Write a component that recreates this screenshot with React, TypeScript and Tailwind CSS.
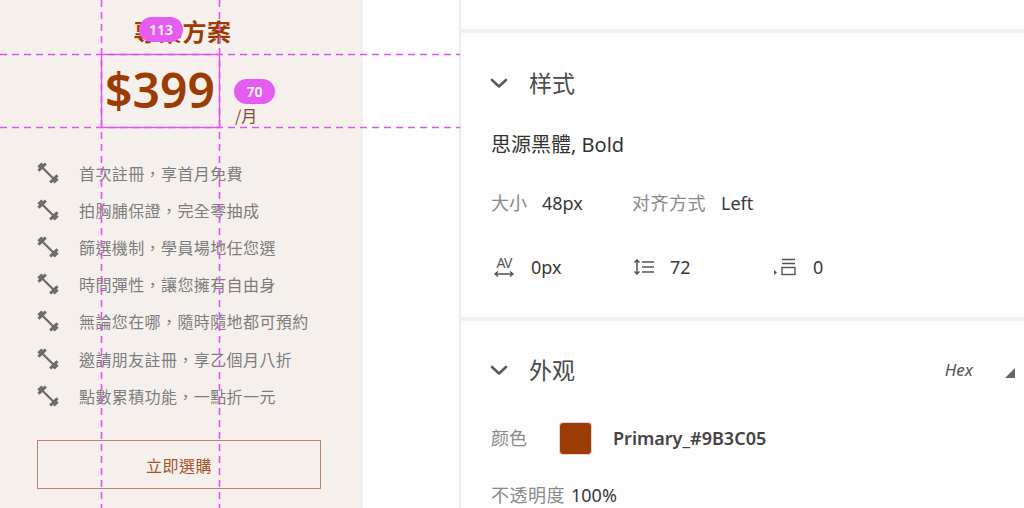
import React from 'react';

const features = [
  '首次註冊，享首月免費',
  '拍胸脯保證，完全零抽成',
  '篩選機制，學員場地任您選',
  '時間彈性，讓您擁有自由身',
  '無論您在哪，隨時隨地都可預約',
  '邀請朋友註冊，享乙個月八折',
  '點數累積功能，一點折一元',
];

function Dumbbell() {
  return (
    <svg width="22" height="22" viewBox="0 0 22 22" className="shrink-0">
      <g transform="rotate(45 11 11)" fill="#6a6a6a">
        <rect x="3" y="10" width="16" height="2.2" />
        <rect x="1.2" y="5.8" width="3" height="10.4" />
        <rect x="17.8" y="5.8" width="3" height="10.4" />
        <rect x="-1.2" y="8.2" width="2.6" height="5.6" />
        <rect x="20.6" y="8.2" width="2.6" height="5.6" />
      </g>
    </svg>
  );
}

function Chevron() {
  return (
    <svg width="18" height="11" viewBox="0 0 18 11">
      <path d="M2 2 L9 8.5 L16 2" fill="none" stroke="#5a5a5a" strokeWidth="2.6" strokeLinecap="round" strokeLinejoin="round" />
    </svg>
  );
}

function Guides() {
  return (
    <svg width="460" height="508" className="absolute left-0 top-0 pointer-events-none">
      <g stroke="#e055f0" strokeWidth="1.6" strokeDasharray="7 5">
        <line x1="101.5" y1="0" x2="101.5" y2="508" />
        <line x1="219.5" y1="0" x2="219.5" y2="508" />
        <line x1="0" y1="54.5" x2="460" y2="54.5" />
        <line x1="0" y1="127.5" x2="460" y2="127.5" />
      </g>
      <rect x="101.5" y="54.5" width="118" height="73" fill="none" stroke="#e055f0" strokeWidth="1.4" />
    </svg>
  );
}

export default function App() {
  return (
    <div className="relative flex w-[1024px] h-[508px] overflow-hidden bg-[#fdfdfd]">
      {/* 左側：方案卡片 */}
      <div
        className="w-[363px] h-full shrink-0 bg-[#f5f0ec] flex flex-col"
        style={{ fontFamily: '"Noto Sans CJK TC", "Noto Sans", sans-serif' }}
      >
        <div className="pt-[16px] h-[45px] shrink-0 text-center pl-[2px] text-[24px] leading-[29px] font-bold tracking-[0.5px] text-[#9B3C05]">
          專業方案
        </div>
        <div className="mt-[9px] flex items-end pl-[101px] shrink-0">
          <span
            className="w-[118px] h-[72px] text-center text-[48px] leading-[72px] font-semibold text-[#9B3C05]"
            style={{ fontFamily: '"Noto Sans", "Noto Sans CJK TC", sans-serif' }}
          >
            $399
          </span>
          <span className="ml-[16px] mb-[1px] text-[16px] leading-[20px] text-[#7e4a2c]">/月</span>
        </div>
        <ul className="mt-[28px] flex flex-col shrink-0">
          {features.map((f) => (
            <li key={f} className="h-[37.2px] flex items-center pl-[37px]">
              <Dumbbell />
              <span className="ml-[20px] text-[16px] tracking-[0.4px] text-[#7d7d7d]">{f}</span>
            </li>
          ))}
        </ul>
        <button className="mt-[26px] ml-[37px] w-[284px] h-[49px] shrink-0 border-[1.5px] border-[#bb8566] text-[16px] tracking-[0.5px] text-[#a4552b]">
          立即選購
        </button>
      </div>

      {/* 中間空白 */}
      <div className="w-[96px] h-full shrink-0 bg-[#fefefe]" />
      <div className="w-[2px] h-full shrink-0 bg-[#ececec]" />

      {/* 右側：屬性面板 */}
      <div
        className="flex-1 flex flex-col bg-[#fdfdfd]"
        style={{ fontFamily: '"Noto Sans", "Noto Sans CJK SC", sans-serif' }}
      >
        <div className="h-[29px] shrink-0" />
        <div className="h-[4px] shrink-0 bg-[#f1f1f1]" />
        <section className="h-[284px] shrink-0 flex flex-col">
          <div className="mt-[30px] h-[40px] shrink-0 flex items-center pl-[29px]">
            <Chevron />
            <span className="ml-[21px] text-[23px] text-[#4a4a4a]">样式</span>
          </div>
          <div className="mt-[22px] h-[40px] shrink-0 flex items-center pl-[30px] text-[20px] text-[#333]">
            思源黑體, Bold
          </div>
          <div className="mt-[18px] h-[40px] shrink-0 flex items-center pl-[30px] text-[18px]">
            <div className="w-[141px] flex items-center">
              <span className="text-[#8a8a8a]">大小</span>
              <span className="ml-[15px] text-[#3a3a3a]">48px</span>
            </div>
            <span className="text-[#8a8a8a] tracking-[0.5px]">对齐方式</span>
            <span className="ml-[15px] text-[#3a3a3a]">Left</span>
          </div>
          <div className="mt-[24px] h-[40px] shrink-0 flex items-center pl-[32px] text-[18px] text-[#3a3a3a]">
            <div className="w-[140px] flex items-center">
              <div className="w-[22px] flex flex-col items-center text-[#555]">
                <span className="text-[14px] leading-[14px] tracking-[-1px]">AV</span>
                <svg width="22" height="8" viewBox="0 0 22 8">
                  <path d="M2 4 H20 M5 1.5 L2 4 L5 6.5 M17 1.5 L20 4 L17 6.5" fill="none" stroke="#555" strokeWidth="1.4" />
                </svg>
              </div>
              <span className="ml-[16px]">0px</span>
            </div>
            <div className="w-[140px] flex items-center">
              <svg width="22" height="18" viewBox="0 0 22 18">
                <path d="M4 2 V16 M1.5 4.5 L4 2 L6.5 4.5 M1.5 13.5 L4 16 L6.5 13.5" fill="none" stroke="#555" strokeWidth="1.5" />
                <path d="M9 4 H21 M9 9 H21 M9 14 H21" stroke="#555" strokeWidth="1.5" />
              </svg>
              <span className="ml-[15px]">72</span>
            </div>
            <div className="flex items-center">
              <svg width="24" height="20" viewBox="0 0 24 20">
                <path d="M1 13 L4 15.5 L1 18 Z" fill="#555" />
                <path d="M9 2.5 H22 M9 6.5 H22" stroke="#555" strokeWidth="1.4" />
                <rect x="9" y="10.5" width="13" height="7" fill="none" stroke="#555" strokeWidth="1.4" />
              </svg>
              <span className="ml-[16px]">0</span>
            </div>
          </div>
        </section>
        <div className="h-[4px] shrink-0 bg-[#f1f1f1]" />
        <section className="flex-1 flex flex-col">
          <div className="mt-[29px] h-[40px] shrink-0 flex items-center pl-[29px] pr-[9px]">
            <Chevron />
            <span className="ml-[21px] text-[23px] text-[#4a4a4a]">外观</span>
            <span className="ml-auto text-[17px] italic text-[#555]">Hex</span>
            <svg width="10" height="10" viewBox="0 0 10 10" className="ml-[32px] mt-[6px]">
              <path d="M10 0 V10 H0 Z" fill="#666" />
            </svg>
          </div>
          <div className="mt-[28px] h-[40px] shrink-0 flex items-center pl-[30px]">
            <span className="text-[18px] text-[#8a8a8a]">颜色</span>
            <div className="ml-[32px] w-[33px] h-[33px] rounded-[4px] bg-[#9B3C05] border border-[#e2d6cf]" />
            <span className="ml-[21px] text-[18px] font-semibold text-[#444]">Primary_#9B3C05</span>
          </div>
          <div className="mt-[17px] h-[40px] shrink-0 flex items-center pl-[30px] text-[18px]">
            <span className="text-[#8a8a8a] tracking-[0.5px]">不透明度</span>
            <span className="ml-[6px] text-[#3a3a3a]">100%</span>
          </div>
        </section>
      </div>

      {/* 量測輔助線與標籤 */}
      <Guides />
      <div className="absolute left-[139px] top-[17px] w-[44px] h-[25px] rounded-full bg-[#e55cf0] flex items-center justify-center text-[14px] font-semibold text-white" style={{ fontFamily: '"Noto Sans", sans-serif' }}>
        113
      </div>
      <div className="absolute left-[234px] top-[79px] w-[41px] h-[25px] rounded-full bg-[#e55cf0] flex items-center justify-center text-[14px] font-semibold text-white" style={{ fontFamily: '"Noto Sans", sans-serif' }}>
        70
      </div>
    </div>
  );
}
